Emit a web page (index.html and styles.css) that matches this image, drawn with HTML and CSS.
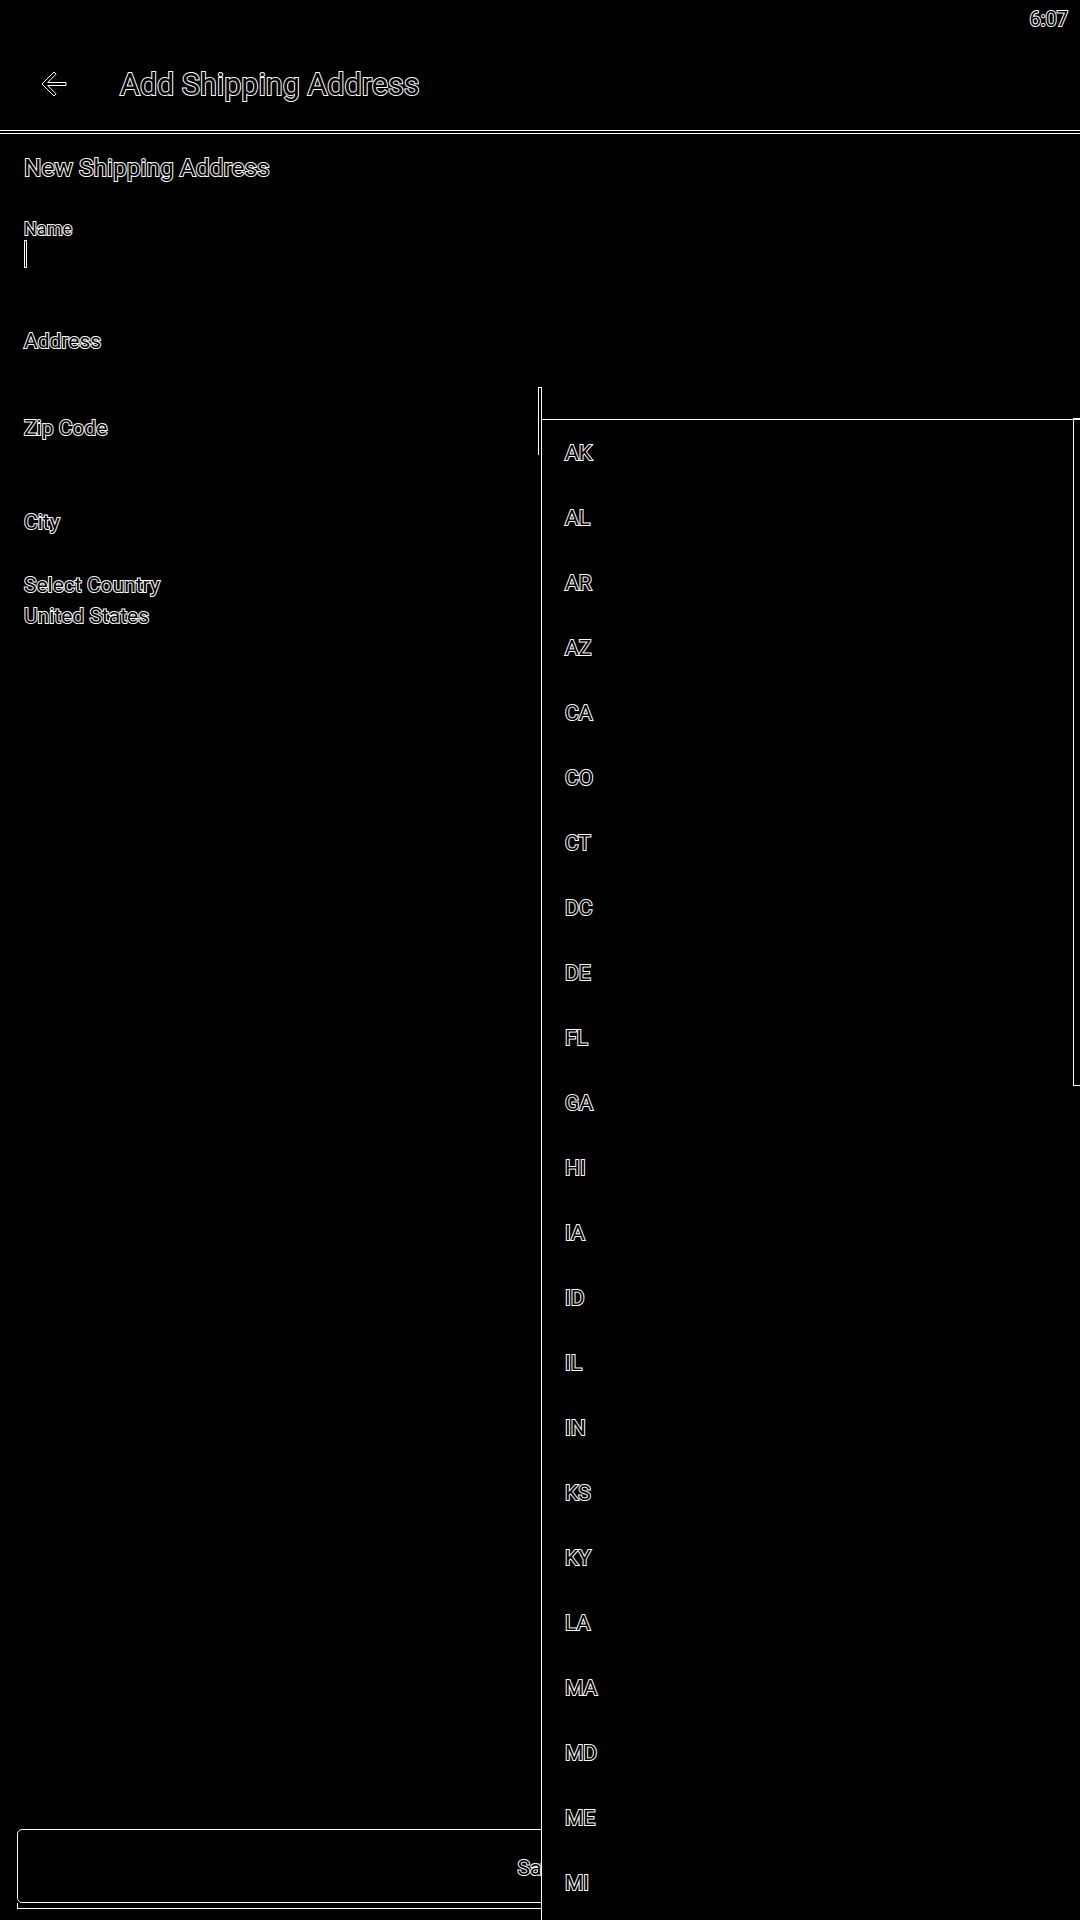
FILE: index.html
```html
<!DOCTYPE html>
<html lang="en">
<head>
<meta charset="utf-8">
<title>Add Shipping Address</title>
<link rel="stylesheet" href="styles.css">
</head>
<body>
<div class="screen">
  <div class="statusbar"><span class="time">6:07</span></div>
  <header class="toolbar">
    <svg class="back" viewBox="0 0 24 24" width="36" height="36" aria-hidden="true">
      <path d="M20 11H7.830l5.59-5.59L12 4l-8 8 8 8 1.41-1.41L7.83 13H20v-2z" fill="none" stroke="#fff" stroke-width="1" vector-effect="non-scaling-stroke"/>
    </svg>
    <h1 class="title">Add Shipping Address</h1>
  </header>
  <div class="toolbar-edge"></div>

  <main class="form">
    <h2 class="form-heading">New Shipping Address</h2>
    <label class="float-label">Name</label>
    <div class="cursor"></div>
    <div class="hint hint-address">Address</div>
    <div class="hint hint-zip">Zip Code</div>
    <div class="hint hint-city">City</div>
    <div class="hint hint-country">Select Country</div>
    <div class="value">United States</div>
  </main>

  <div class="actions">
    <button class="save">Save</button>
    <div class="save-shadow"></div>
  </div>

  <div class="state-anchor"></div>
  <div class="dropdown">
    <ul class="states">
      <li>AK</li><li>AL</li><li>AR</li><li>AZ</li><li>CA</li><li>CO</li><li>CT</li><li>DC</li>
      <li>DE</li><li>FL</li><li>GA</li><li>HI</li><li>IA</li><li>ID</li><li>IL</li><li>IN</li>
      <li>KS</li><li>KY</li><li>LA</li><li>MA</li><li>MD</li><li>ME</li><li>MI</li>
    </ul>
    <div class="scrollbar"></div>
  </div>
</div>
</body>
</html>
```
FILE: styles.css
```css
* { box-sizing: border-box; }
html, body {
  margin: 0;
  padding: 0;
  background: #000;
}
body {
  font-family: Roboto, "Noto Sans", "Liberation Sans", sans-serif;
  color: #000;
  -webkit-text-stroke: 2px #fff;
  paint-order: stroke fill;
}
.screen {
  position: relative;
  width: 1080px;
  height: 1920px;
  overflow: hidden;
  display: flex;
  flex-direction: column;
  background: #000;
}
.statusbar {
  height: 36px;
  display: flex;
  justify-content: flex-end;
  align-items: center;
  padding: 1px 12px 0 0;
}
.time {
  font-size: 20px;
  line-height: 34px;
}
.toolbar {
  height: 94px;
  display: flex;
  align-items: center;
  padding: 3px 0 0 36px;
}
.back {
  display: block;
  flex: none;
  margin-top: -2px;
}
.title {
  margin: 0 0 0 48px;
  font-size: 30.5px;
  font-weight: 400;
  line-height: 36px;
}
.toolbar-edge {
  height: 4px;
  border-top: 1px solid #fff;
  border-bottom: 1px solid #fff;
}
.form {
  flex: 1;
  display: flex;
  flex-direction: column;
  align-items: flex-start;
  padding-left: 24px;
}
.form-heading {
  margin: 20px 0 0;
  font-size: 24.5px;
  font-weight: 400;
  line-height: 28px;
}
.float-label {
  margin-top: 37px;
  font-size: 18px;
  line-height: 20px;
}
.cursor {
  width: 3px;
  height: 28px;
  margin-top: 1px;
  border: 1px solid #fff;
}
.hint, .value {
  font-size: 21px;
  line-height: 25px;
}
.hint-address { margin-top: 61px; }
.hint-zip { margin-top: 62px; }
.hint-city { margin-top: 69px; }
.hint-country { margin-top: 38px; }
.value { margin-top: 6px; }

.actions {
  padding: 0 17px 11px;
}
.save {
  display: block;
  width: 100%;
  height: 74px;
  margin: 0;
  padding-top: 4px;
  border: 1px solid #fff;
  border-radius: 5px;
  background: #000;
  color: #000;
  -webkit-text-stroke: 2px #fff;
  paint-order: stroke fill;
  font-family: Roboto, "Noto Sans", "Liberation Sans", sans-serif;
  font-size: 21px;
}
.save-shadow {
  height: 6px;
  border: 1px solid #fff;
  border-top: none;
}

.state-anchor {
  position: absolute;
  left: 538px;
  top: 387px;
  width: 4px;
  height: 68px;
  border: 1px solid #fff;
  border-bottom: none;
}
.dropdown {
  position: absolute;
  left: 541px;
  top: 419px;
  right: 0;
  bottom: 0;
  background: #000;
  border-left: 1px solid #fff;
  border-top: 1px solid #fff;
  z-index: 2;
}
.states {
  list-style: none;
  margin: 0;
  padding: 1px 0 0;
}
.states li {
  height: 65px;
  line-height: 65px;
  padding-left: 23px;
  font-size: 21px;
}
.scrollbar {
  position: absolute;
  right: 0;
  top: -2px;
  width: 7px;
  height: 668px;
  border: 1px solid #fff;
  border-right: none;
}
```
